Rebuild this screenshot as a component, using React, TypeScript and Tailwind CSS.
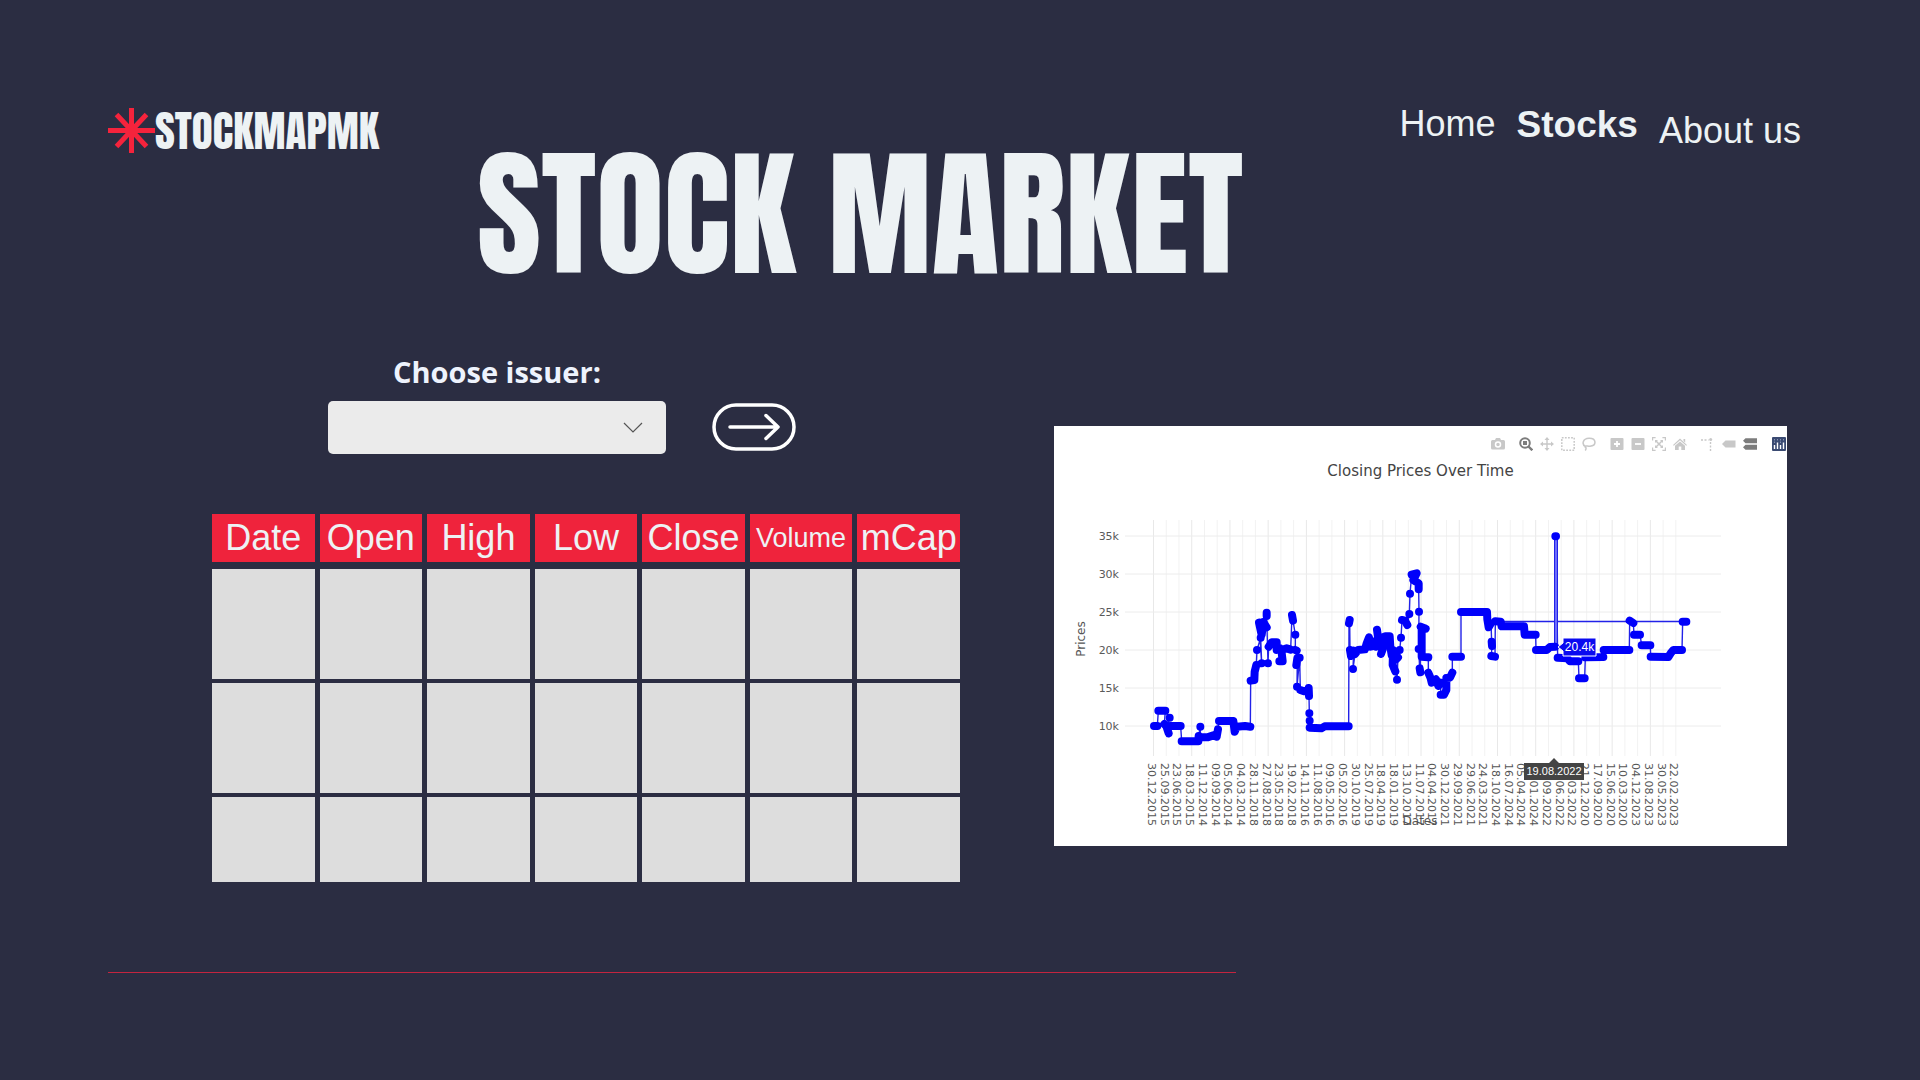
import type { ReactNode } from 'react';

const COLUMNS = ['Date', 'Open', 'High', 'Low', 'Close', 'Volume', 'mCap'];
const ROW_HEIGHTS = ['h-[110px]', 'h-[110px]', 'h-[85px]'];

const DATES = [
  '30.12.2015', '25.09.2015', '23.06.2015', '18.03.2015', '11.12.2014', '09.09.2014', '05.06.2014',
  '04.03.2014', '28.11.2018', '27.08.2018', '23.05.2018', '19.02.2018', '14.11.2016', '11.08.2016',
  '09.05.2016', '05.02.2016', '30.10.2019', '25.07.2019', '18.04.2019', '18.01.2019', '13.10.2017',
  '11.07.2017', '04.04.2017', '30.12.2021', '29.09.2021', '29.06.2021', '24.03.2021', '18.10.2024',
  '16.07.2024', '05.04.2024', '03.01.2024', '07.09.2022', '06.06.2022', '03.03.2022', '21.12.2020',
  '17.09.2020', '15.06.2020', '10.03.2020', '04.12.2023', '31.08.2023', '30.05.2023', '22.02.2023',
];

const PRICE_TICKS = [
  { label: '35k', y: 55 },
  { label: '30k', y: 93 },
  { label: '25k', y: 131 },
  { label: '20k', y: 169 },
  { label: '15k', y: 207 },
  { label: '10k', y: 245 },
];

/* Runs of neighbouring closing prices, in thirds of a plot unit from (66, 119). */
type Run = [number, number][];
const RUNS: Run[] = [
  [[102, 378], [112, 378]],
  [[115, 332], [136, 332]],
  [[133, 372], [138, 378]],
  [[149, 353]],
  [[141, 385], [146, 400]],
  [[150, 378], [182, 378]],
  [[185, 424], [235, 424], [236, 408]],
  [[241, 380]],
  [[241, 412], [262, 412], [280, 406], [290, 410], [294, 388]],
  [[297, 363], [340, 363], [344, 395], [350, 380], [375, 378], [391, 380]],
  [[392, 242], [403, 240], [404, 215], [409, 195]],
  [[411, 150]],
  [[422, 113]],
  [[425, 190]],
  [[417, 68], [425, 105], [430, 66], [440, 82]],
  [[440, 38], [440, 48]],
  [[444, 190]],
  [[446, 140], [455, 127], [470, 127], [470, 150], [480, 145]],
  [[478, 184], [488, 184], [484, 150], [500, 145], [512, 149]],
  [[516, 45], [519, 62]],
  [[526, 104]],
  [[526, 150], [530, 152]],
  [[529, 195], [532, 175]],
  [[531, 260]],
  [[539, 173]],
  [[541, 270], [552, 274], [565, 270], [566, 264], [567, 288]],
  [[568, 340]],
  [[569, 362]],
  [[569, 383], [604, 385], [614, 379], [686, 379]],
  [[687, 70], [689, 60]],
  [[690, 150], [693, 168], [701, 152]],
  [[699, 207]],
  [[705, 162], [714, 150], [735, 148], [740, 130], [747, 112], [752, 140], [762, 125], [768, 140], [774, 112], [771, 89]],
  [[776, 110], [780, 135], [788, 112], [788, 148], [783, 162]],
  [[790, 130], [796, 109], [809, 109], [811, 140], [815, 165], [819, 150], [818, 195], [826, 214]],
  [[831, 239]],
  [[834, 172], [828, 178]],
  [[839, 150]],
  [[843, 113]],
  [[846, 60], [855, 62], [862, 75]],
  [[868, 42]],
  [[870, -19]],
  [[875, -76], [890, -80], [880, -60], [896, -50], [896, -32]],
  [[897, 35]],
  [[896, 147]],
  [[899, 205], [901, 217]],
  [[902, 80], [917, 86], [905, 82], [905, 170], [925, 172]],
  [[925, 218], [932, 235], [935, 248], [948, 238], [955, 258], [962, 248]],
  [[962, 284], [972, 284], [979, 270], [979, 234], [990, 233], [997, 218]],
  [[997, 170], [1023, 170]],
  [[1023, 36], [1101, 36], [1102, 58], [1106, 82], [1113, 70]],
  [[1115, 125], [1116, 138]],
  [[1114, 168], [1125, 170]],
  [[1126, 64], [1142, 65], [1145, 79], [1212, 79], [1214, 104], [1247, 104]],
  [[1248, 150], [1280, 150], [1290, 141], [1305, 140]],
  [[1306, -191], [1308, -191]],
  [[1313, 173], [1342, 175], [1350, 184], [1375, 184]],
  [[1377, 235], [1394, 235]],
  [[1396, 172], [1450, 171]],
  [[1451, 150], [1528, 150]],
  [[1529, 62], [1540, 69]],
  [[1542, 104], [1560, 104]],
  [[1565, 136], [1591, 136]],
  [[1592, 170], [1645, 171], [1652, 160], [1660, 150], [1686, 150]],
  [[1688, 65], [1699, 65]],
];

const toPoint = ([x, y]: [number, number]) => `${66 + x / 3} ${119 + y / 3}`;
const linePath = `M${RUNS.flat().map(toPoint).join('L')}`;
const markerPath = RUNS.map((run) => `M${toPoint(run[0])}${run.map((p) => `L${toPoint(p)}`).join('')}`).join('');

function PriceChart() {
  return (
    <svg
      viewBox="0 0 733 365"
      className="block h-auto w-full"
      role="img"
      aria-label="Closing prices over time"
      fontFamily='"DejaVu Sans", Verdana, sans-serif'
    >
      {DATES.map((date, i) => (
        <line key={date} x1={99.5 + i * 12.74} x2={99.5 + i * 12.74} y1="39" y2="275" stroke={i % 3 === 0 ? '#e8e8e8' : '#f2f2f2'} />
      ))}
      {PRICE_TICKS.map(({ label, y }) => (
        <g key={label}>
          <line x1="71" x2="667" y1={y} y2={y} stroke="#ececec" />
          <text x="65" y={y + 4} textAnchor="end" fontSize="11" fill="#5a5a5a">{label}</text>
        </g>
      ))}
      {DATES.map((date, i) => (
        <text key={date} transform={`translate(${94 + i * 12.74} 282) rotate(90)`} fontSize="11" fill="#555">{date}</text>
      ))}
      <text x="366" y="344" textAnchor="middle" fontSize="12" fill="#555">Dates</text>
      <text transform="translate(31 158) rotate(-90)" textAnchor="middle" fontSize="12" fill="#555">Prices</text>

      <path d={linePath} fill="none" stroke="#2222e8" strokeWidth="1.4" strokeLinejoin="round" />
      <path d="M446 140.500H633" stroke="#2222e8" strokeWidth="1.4" />
      <path d="M500.500 55h3v110h-3z" fill="#6c6cfa" />
      <path d="M500.500 55v110M503.500 55v110" stroke="#2222e8" />
      <path d={markerPath} fill="none" stroke="#0000fa" strokeWidth="8" strokeLinecap="round" strokeLinejoin="round" />

      <path d="M504 166l5-4v-5h33v18h-33v-5z" fill="#0a0af0" stroke="#fff" />
      <text x="525.500" y="170" textAnchor="middle" fontSize="12" fill="#fff" fontFamily='"Liberation Sans", Arial, sans-serif'>20.4k</text>
      <path d="M500 277l5 5h25v17h-60v-17h25z" fill="#444" />
      <text x="500" y="294" textAnchor="middle" fontSize="11" fill="#fff" fontFamily='"Liberation Sans", Arial, sans-serif'>19.08.2022</text>
    </svg>
  );
}

function Tool({ label, active = false, children }: { label: string; active?: boolean; children: ReactNode }) {
  return (
    <button
      type="button"
      aria-label={label}
      className={`flex h-[21px] w-[21px] items-center justify-center ${active ? 'text-[#7c7c7c]' : 'text-[#c8c8c8]'}`}
    >
      <svg viewBox="0 0 14 14" className="h-[14px] w-[14px]" fill="none" stroke="currentColor" strokeWidth="1.500">
        {children}
      </svg>
    </button>
  );
}

function ModeBar() {
  return (
    <div className="flex justify-end gap-[7px] pr-px pt-[7px]" role="toolbar" aria-label="Chart tools">
      <Tool label="Download plot">
        <path d="M0 4.500a1.500 1.500 0 0 1 1.500-1.500H4l1-2h4l1 2h2.500A1.500 1.500 0 0 1 14 4.500v6.500a1.500 1.500 0 0 1-1.500 1.500h-11A1.500 1.500 0 0 1 0 11z" fill="currentColor" stroke="none" />
        <circle cx="7" cy="7.500" r="2.500" stroke="#fff" />
      </Tool>
      <div className="flex">
        <Tool label="Zoom" active>
          <circle cx="6" cy="6" r="4.800" strokeWidth="2" />
          <rect x="4" y="4" width="4" height="4" fill="currentColor" stroke="none" />
          <path d="M9.500 9.500L13.300 13.300" strokeWidth="2.400" />
        </Tool>
        <Tool label="Pan">
          <path d="M7 2v10M2 7h10" strokeWidth="1.400" />
          <path d="M7 0l2.500 3h-5zM7 14l2.500-3h-5zM0 7l3-2.500v5zM14 7l-3-2.500v5z" fill="currentColor" stroke="none" />
        </Tool>
        <Tool label="Box select">
          <rect x="0.800" y="0.800" width="12.400" height="12.400" strokeDasharray="1.800 1.300" />
        </Tool>
        <Tool label="Lasso select">
          <path d="M3.500 9.500C-.5 7.500.5 1.500 7 1.200c7.500-.2 8 7.300 1 8-2 .2-3-.6-4-.2-1.600.6-.6 2.200.6 1.600M3.800 10.500c.4 1 .2 2-.6 3" strokeWidth="1.500" />
        </Tool>
      </div>
      <div className="flex">
        <Tool label="Zoom in">
          <rect x="0.500" y="1" width="13" height="12" rx="1" fill="currentColor" stroke="none" />
          <path d="M7 4v6M4 7h6" stroke="#fff" strokeWidth="1.800" />
        </Tool>
        <Tool label="Zoom out">
          <rect x="0.500" y="1" width="13" height="12" rx="1" fill="currentColor" stroke="none" />
          <path d="M4 7h6" stroke="#fff" strokeWidth="1.800" />
        </Tool>
        <Tool label="Autoscale">
          <path d="M.6 3.500V.6h3M10.400.6h3v2.900M13.400 10.500v2.900h-3M3.600 13.400h-3v-2.900" strokeWidth="1.200" />
          <path d="M3.500 3.500l7 7M10.500 3.500l-7 7" />
          <path d="M3 3h3L3 6zM11 3v3L8 3zM11 11H8l3-3zM3 11V8l3 3z" fill="currentColor" stroke="none" />
        </Tool>
        <Tool label="Reset axes">
          <path d="M7 1.500L14 8l-.8.800L7 3.300.8 8.800 0 8zM10.500 2h1.700v3.500l-1.700-1.500z" fill="currentColor" stroke="none" />
          <path d="M7 4.500l5 4.300V13H8.300V9.500H5.700V13H2V8.800z" fill="currentColor" stroke="none" />
        </Tool>
      </div>
      <div className="flex">
        <Tool label="Toggle spike lines">
          <path d="M0 3h7.500M9.500 5v9" strokeDasharray="2 1.500" strokeWidth="1.400" />
          <circle cx="9.700" cy="2.600" r="1.500" fill="currentColor" stroke="none" />
        </Tool>
        <Tool label="Show closest data on hover">
          <path d="M0 7l3.500-3.500H13.500v7h-10z" fill="currentColor" stroke="none" />
        </Tool>
        <Tool label="Compare data on hover" active>
          <path d="M0 3.800L2.500 1.300H14v5H2.500zM0 10.200l2.500-2.500H14v5H2.500z" fill="currentColor" stroke="none" />
        </Tool>
      </div>
      <a href="#plotly" aria-label="Produced with Plotly" className="ml-[5px] flex h-[21px] items-center">
        <svg viewBox="0 0 14 14" className="h-[14px] w-[14px]">
          <rect width="14" height="14" rx="1" fill="#3a4a72" />
          <path d="M2.500 8v4M5.500 5.500V12M8.500 8v4M11.500 5.500V12" stroke="#fff" strokeWidth="1.400" />
          <path d="M2 2.800h10M2 5.200h1.200M8 5.200h1.200" stroke="#a9b3cf" strokeDasharray="1 2" />
        </svg>
      </a>
    </div>
  );
}

export default function App() {
  return (
    <div className="min-h-screen overflow-hidden bg-[#2b2d42] font-['Liberation_Sans',Arial,sans-serif] text-[#edf2f4]">
      <header className="flex items-start justify-between pl-[108px] pr-[119px] pt-[100px]">
        <div className="flex items-start gap-[98px]">
          <a href="#top" className="flex items-center pt-2">
            <svg viewBox="0 0 47 45" className="h-[45px] w-[47px]" stroke="#f5233c" strokeWidth="5" aria-hidden="true">
              <path d="M23.500 0v45M0 22.500h47M8.500 6.500l30 32M38.500 6.500l-30 32" />
            </svg>
            <span className="font-['Anton',Impact,sans-serif] text-[43px] leading-[45px]">STOCKMAPMK</span>
          </a>
          <h1 className="pt-[42px] font-['Anton',Impact,sans-serif] text-[139px] font-normal leading-[144px] whitespace-nowrap">
            STOCK MARKET
          </h1>
        </div>
        <nav aria-label="Main" className="box-content flex h-[43px] items-start gap-[21px] pt-[6px] text-4xl leading-[36px] whitespace-nowrap">
          <a href="#home">Home</a>
          <a href="#stocks" aria-current="page" className="text-[37px] font-bold leading-[38px]">Stocks</a>
          <a href="#about" className="self-end">About us</a>
        </nav>
      </header>

      <main className="flex items-start gap-[94px] pl-[212px] pr-[133px] pt-[66px]">
        <div className="min-w-0 flex-[748]">
          <form className="grid grid-cols-[338px_84px] items-center gap-x-[46px] pl-[116px]">
            <label htmlFor="issuer" className="text-center font-['Open_Sans',sans-serif] text-[29px] font-bold leading-[40px] text-[#eef3fd]">
              Choose issuer:
            </label>
            <div className="relative col-start-1 mt-[9px]">
              <select id="issuer" className="block h-[53px] w-full appearance-none rounded-[5px] bg-[#ebebeb] px-4 text-xl text-[#2b2d42]">
                <option value="" />
              </select>
              <svg viewBox="0 0 20 12" className="pointer-events-none absolute right-[23px] top-[21px] h-3 w-5" fill="none" stroke="#555" strokeWidth="1.200" aria-hidden="true">
                <path d="M1 1l9 9 9-9" />
              </svg>
            </div>
            <button type="button" aria-label="Show issuer" className="mt-2 text-white">
              <svg viewBox="0 0 84 48" className="h-12 w-[84px]" fill="none" stroke="currentColor" strokeWidth="3.500" strokeLinecap="round" strokeLinejoin="round">
                <rect x="2" y="2" width="80" height="44" rx="22" />
                <path d="M18 24h48M54 12.500L66 24 54 35.500" strokeWidth="3.500" />
              </svg>
            </button>
          </form>

          <table className="-mx-[5px] mt-[56px] w-[calc(100%+10px)] table-fixed border-separate border-spacing-x-[5px] border-spacing-y-1">
            <thead>
              <tr>
                {COLUMNS.map((name) => (
                  <th key={name} scope="col" className="p-0 pb-[3px] font-normal">
                    <div className={`flex h-12 items-center justify-center bg-[#ef233c] ${name === 'Volume' ? 'text-[27px]' : 'text-4xl'}`}>
                      {name}
                    </div>
                  </th>
                ))}
              </tr>
            </thead>
            <tbody>
              {ROW_HEIGHTS.map((height, row) => (
                <tr key={row}>
                  {COLUMNS.map((name) => (
                    <td key={name} className={`bg-[#dddddd] p-0 ${height}`} />
                  ))}
                </tr>
              ))}
            </tbody>
          </table>
        </div>

        <section className="mt-[74px] min-w-0 flex-[733] bg-white">
          <ModeBar />
          <h2 className="mt-[7px] text-center font-['DejaVu_Sans',Verdana,sans-serif] text-[15px] leading-5 text-[#444]">
            Closing Prices Over Time
          </h2>
          <PriceChart />
        </section>
      </main>

      <hr className="ml-[108px] mt-[86px] w-[58.75%] border-t border-[#c4243f]" />
    </div>
  );
}
